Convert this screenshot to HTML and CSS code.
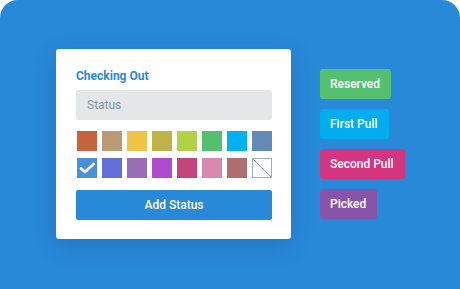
FILE: index.html
```html
<!DOCTYPE html>
<html lang="en">
<head>
  <meta charset="UTF-8" />
  <title>Status Picker</title>
  <link rel="stylesheet" href="styles.css">
</head>
<body>
  <div class="stage">
    <div class="card">
      <h2 class="card-title">Checking Out</h2>
      <input class="status-input" type="text" placeholder="Status" />
      <div class="swatches">
        <span class="swatch" style="background:#c4633e"></span>
        <span class="swatch" style="background:#b99a75"></span>
        <span class="swatch" style="background:#efc343"></span>
        <span class="swatch" style="background:#c0b248"></span>
        <span class="swatch" style="background:#b1d247"></span>
        <span class="swatch" style="background:#53c06e"></span>
        <span class="swatch" style="background:#00b1ef"></span>
        <span class="swatch" style="background:#628bba"></span>
        <span class="swatch selected" style="background:#4a8fda">
          <svg width="20" height="20" viewBox="0 0 20 20"><polyline points="4,10.5 8,14 16.5,6" fill="none" stroke="#fff" stroke-width="2.6" stroke-linecap="round" stroke-linejoin="round"/></svg>
        </span>
        <span class="swatch" style="background:#6370da"></span>
        <span class="swatch" style="background:#9a6db9"></span>
        <span class="swatch" style="background:#ae4bce"></span>
        <span class="swatch" style="background:#c3457b"></span>
        <span class="swatch" style="background:#da89ae"></span>
        <span class="swatch" style="background:#ae706e"></span>
        <span class="swatch none">
          <svg width="18" height="18" viewBox="0 0 18 18"><line x1="0" y1="0" x2="18" y2="18" stroke="#8fa4bb" stroke-width="1"/></svg>
        </span>
      </div>
      <button class="add-btn">Add Status</button>
    </div>

    <div class="tags">
      <div class="tag" style="background:#55c170">Reserved</div>
      <div class="tag" style="background:#00aeef">First Pull</div>
      <div class="tag" style="background:#d3367f">Second Pull</div>
      <div class="tag" style="background:#8854a9">Picked</div>
    </div>
  </div>
</body>
</html>
```

FILE: styles.css
```css
body {
  margin: 0;
  background: #ffffff;
  font-family: Roboto, 'Liberation Sans', sans-serif;
}

.stage {
  height: 289px;
  box-sizing: border-box;
  background: #2889d9;
  border-radius: 18px 18px 0 0;
  padding: 49px 0 0 56px;
  display: flex;
  align-items: flex-start;
  gap: 29px;
}

.card {
  width: 235px;
  box-sizing: border-box;
  background: #ffffff;
  border-radius: 3px;
  padding: 20px 19px 19px 20px;
  box-shadow: 0 6px 22px rgba(10, 50, 100, 0.22);
}

.card-title {
  margin: 0 0 7px;
  font-size: 12px;
  line-height: 14px;
  font-weight: 700;
  color: #2889d9;
}

.status-input {
  display: block;
  width: 100%;
  height: 30px;
  box-sizing: border-box;
  border: none;
  border-radius: 2px;
  background: #e4e7e8;
  padding: 0 11px;
  font-family: Roboto, 'Liberation Sans', sans-serif;
  font-size: 12px;
  color: #333;
  outline: none;
}

.status-input::placeholder {
  color: #8593a5;
}

.swatches {
  display: grid;
  grid-template-columns: repeat(8, 20px);
  column-gap: 5px;
  row-gap: 7px;
  margin: 11px 0 12px 1px;
}

.swatch {
  display: block;
  width: 20px;
  height: 20px;
}

.swatch svg {
  display: block;
}

.swatch.none {
  box-sizing: border-box;
  background: #ffffff;
  border: 1px solid #9cadc0;
}

.add-btn {
  display: block;
  width: 100%;
  height: 30px;
  border: none;
  border-radius: 2px;
  background: #2889d9;
  color: #ffffff;
  font-family: Roboto, 'Liberation Sans', sans-serif;
  font-size: 12px;
  font-weight: 500;
  cursor: pointer;
}

.tags {
  margin-top: 20px;
  display: flex;
  flex-direction: column;
  align-items: flex-start;
  gap: 10px;
}

.tag {
  height: 30px;
  line-height: 30px;
  padding: 0 11px 0 10px;
  border-radius: 3px;
  color: #ffffff;
  font-size: 12px;
  font-weight: 500;
}
```
